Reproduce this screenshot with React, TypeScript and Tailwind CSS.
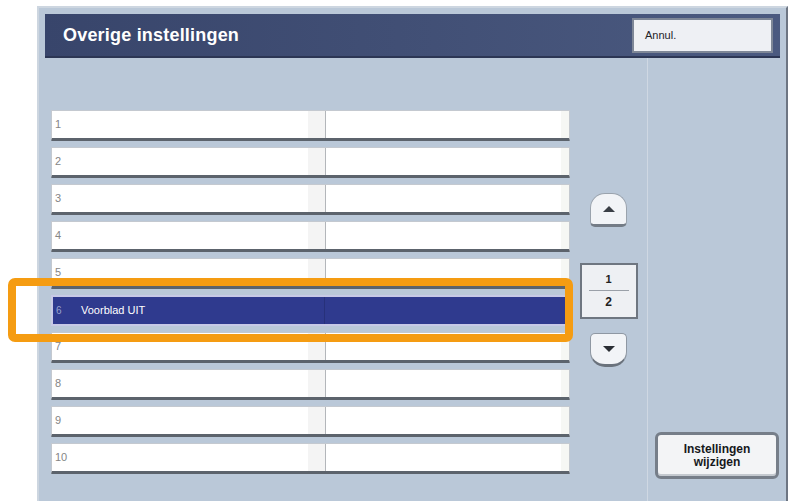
import React from 'react';

const rows = [1, 2, 3, 4, 5, 6, 7, 8, 9, 10];

const ListRow: React.FC<{ n: number; label?: string; selected?: boolean }> = ({ n, label, selected }) => {
  if (selected) {
    return (
      <div className="h-[31px] flex border-2 border-[#c7c9e6] bg-[#2f3a8e]">
        <div className="w-[272px] flex items-center border-r border-[#27317a]">
          <span className="w-[28px] pl-[3px] text-[10px] text-[#9aa3cf]">{n}</span>
          <span className="text-[11px] text-white">{label}</span>
        </div>
        <div className="flex-1" />
      </div>
    );
  }
  return (
    <div className="h-[31px] flex bg-white border border-[#c4c9d0] border-b-[3px] border-b-[#5c636c] rounded-[1px]">
      <div className="w-[273px] flex items-center">
        <span className="flex-1 pl-[3px] text-[11px] text-[#858585]">{n}</span>
        <div className="w-[17px] h-full bg-[#f4f4f4]" />
      </div>
      <div className="w-px bg-[#b3b6ba]" />
      <div className="flex-1 flex">
        <div className="flex-1" />
        <div className="w-[8px] h-full bg-[#f6f7f4]" />
      </div>
    </div>
  );
};

export default function App() {
  return (
    <div className="relative w-[793px] h-[501px] bg-white overflow-hidden" style={{ fontFamily: '"Liberation Sans", Arial, sans-serif' }}>
      {/* panel */}
      <div className="absolute left-[37px] top-[6px] w-[751px] h-[495px] bg-[#bac8d8] border-t-[2px] border-l-[2px] border-[#cdd6e0] border-r-[2px] border-r-[#6d7582] flex flex-col">
        {/* header */}
        <div className="mx-[6px] mt-[6px] h-[44px] flex items-center justify-between bg-gradient-to-r from-[#38456b] to-[#4b5a80] border-b-2 border-[#2c3654]">
          <h1 className="pl-[18px] text-[18px] font-bold text-white tracking-[0.2px]">Overige instellingen</h1>
          <button className="mr-[7px] w-[141px] h-[35px] bg-[#eef0f4] border-2 border-[#7e8797] text-left pl-[11px] text-[11px] text-[#1f2328]">
            Annul.
          </button>
        </div>

        {/* body */}
        <div className="flex flex-1">
          <div className="w-[608px] flex">
            <div className="pl-[12px] pt-[52px] w-[531px]">
              <div className="flex flex-col gap-[6px]">
                {rows.map((n) => (
                  <ListRow key={n} n={n} label={n === 6 ? 'Voorblad UIT' : undefined} selected={n === 6} />
                ))}
              </div>
            </div>
            <div className="flex-1 flex flex-col items-center pt-[135px]">
              <button className="w-[37px] h-[34px] rounded-t-[15px] rounded-b-[5px] bg-[#f2f4f7] border border-[#9aa3ad] border-b-[3px] border-b-[#747c86] flex items-center justify-center">
                <svg width="14" height="8" viewBox="0 0 14 8"><path d="M1 7 L7 1 L13 7 Z" fill="#3a3f46" /></svg>
              </button>
              <div className="mt-[36px] w-[58px] h-[56px] bg-[#eef0f3] border-2 border-[#6e7680] flex flex-col items-center justify-center">
                <span className="text-[11px] font-bold text-[#222] leading-none">1</span>
                <div className="w-[40px] h-px bg-[#9aa0a8] my-[5px]" />
                <span className="text-[12px] font-bold text-[#222] leading-none">2</span>
              </div>
              <button className="mt-[14px] w-[37px] h-[34px] rounded-b-[15px] rounded-t-[5px] bg-[#f2f4f7] border border-[#8f98a3] border-b-[3px] border-b-[#6a727c] flex items-center justify-center">
                <svg width="14" height="8" viewBox="0 0 14 8"><path d="M1 1 L13 1 L7 7 Z" fill="#2a2e34" /></svg>
              </button>
            </div>
          </div>
          <div className="w-px bg-[#cfd8e3]" />
          <div className="flex-1 flex flex-col justify-end items-center pb-[22px]">
            <button className="w-[124px] h-[47px] rounded-[6px] bg-[#f3f4f6] border-[3px] border-[#767e89] shadow-[inset_0_-2px_0_#c4c9cf] flex flex-col items-center justify-center text-[12px] font-bold text-[#15181c] leading-[13px]">
              <span>Instellingen</span>
              <span>wijzigen</span>
            </button>
          </div>
        </div>
      </div>

      {/* orange highlight */}
      <div className="absolute left-[8px] top-[278px] w-[565px] h-[64px] border-[8px] border-[#f59c12] rounded-[7px]" />
    </div>
  );
}
